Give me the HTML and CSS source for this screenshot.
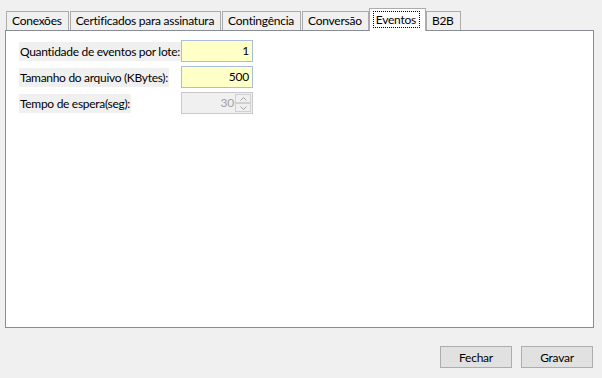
FILE: index.html
```html
<!DOCTYPE html>
<html lang="pt">
  <head>
    <meta charset="UTF-8" />
    <title>Configurações</title>
    <link rel="stylesheet" href="styles.css">
  </head>
  <body>
    <div class="window">
      <div class="tabs">
        <div class="tab">Conexões</div>
        <div class="tab">Certificados para assinatura</div>
        <div class="tab">Contingência</div>
        <div class="tab">Conversão</div>
        <div class="tab active"><span class="focus">Eventos</span></div>
        <div class="tab">B2B</div>
      </div>

      <div class="panel">
        <div class="row">
          <span class="label">Quantidade de eventos por lote:</span>
          <div class="input">1</div>
        </div>
        <div class="row">
          <span class="label">Tamanho do arquivo (KBytes):</span>
          <div class="input">500</div>
        </div>
        <div class="row">
          <span class="label">Tempo de espera(seg):</span>
          <div class="input disabled">
            <span class="value">30</span>
            <span class="spin">
              <span class="arrow">
                <svg width="7" height="4" viewBox="0 0 7 4"><path d="M0.5 3.5 L3.5 0.5 L6.5 3.5" fill="none" stroke="#a0a0a0" stroke-width="1"/></svg>
              </span>
              <span class="arrow">
                <svg width="7" height="4" viewBox="0 0 7 4"><path d="M0.5 0.5 L3.5 3.5 L6.5 0.5" fill="none" stroke="#a0a0a0" stroke-width="1"/></svg>
              </span>
            </span>
          </div>
        </div>
      </div>

      <div class="footer">
        <button class="btn">Fechar</button>
        <button class="btn">Gravar</button>
      </div>
    </div>
  </body>
</html>
```

FILE: styles.css
```css
body {
  margin: 0;
  background-color: #f0f0f0;
  font-family: Lato, "Liberation Sans", sans-serif;
  font-size: 12px;
  letter-spacing: -0.25px;
  color: #000;
}

.window {
  width: 602px;
  height: 378px;
  padding: 9px 8px 0 5px;
  box-sizing: border-box;
}

.tabs {
  display: flex;
  align-items: flex-end;
  padding-left: 1px;
  height: 22px;
  position: relative;
  z-index: 1;
  margin-bottom: -1px;
  white-space: nowrap;
}

.tab {
  height: 19px;
  box-sizing: border-box;
  border: 1px solid #acacac;
  border-bottom: none;
  background-color: #f0f0f0;
  padding: 0 6px 0 5px;
  line-height: 18px;
  margin-bottom: 1px;
}

.tab + .tab {
  margin-left: 1px;
}

.tab.active {
  height: 23px;
  background-color: #fff;
  margin-bottom: 0;
  padding: 2px 5px 0 3px;
  margin-left: 0;
}

.tab.active + .tab {
  margin-left: 0;
}

.focus {
  display: block;
  border: 1px dotted #000;
  padding: 0 3px 0 2px;
  line-height: 15px;
}

.panel {
  height: 298px;
  box-sizing: border-box;
  background-color: #fff;
  border: 1px solid #898c95;
  padding: 9px 0 0 13px;
}

.row {
  display: grid;
  grid-template-columns: 162px 72px;
  align-items: center;
  height: 22px;
  margin-bottom: 4px;
}

.label {
  justify-self: start;
  height: 19px;
  line-height: 19px;
  background-color: #f0f0f0;
  padding: 0 1px;
  letter-spacing: -0.3px;
  white-space: nowrap;
}

.input {
  height: 22px;
  box-sizing: border-box;
  border: 1px solid #a9bedb;
  background-color: #ffffc8;
  text-align: right;
  padding-right: 3px;
  line-height: 20px;
}

.input.disabled {
  display: flex;
  justify-content: flex-end;
  background-color: #f0f0f0;
  border-color: #c8c8c8;
  color: #a0a0a0;
  padding-right: 1px;
}

.value {
  padding-right: 1px;
}

.spin {
  display: flex;
  flex-direction: column;
  width: 16px;
  padding-top: 1px;
}

.arrow {
  height: 9px;
  border: 1px solid #d0d0d0;
  box-sizing: border-box;
  display: flex;
  align-items: center;
  justify-content: center;
}

.footer {
  display: flex;
  justify-content: flex-end;
  gap: 9px;
  padding-top: 18px;
  padding-right: 1px;
}

.btn {
  width: 72px;
  height: 22px;
  background-color: #e1e1e1;
  border: 1px solid #adadad;
  font-family: inherit;
  font-size: 12px;
  letter-spacing: inherit;
  padding: 0;
  color: #000;
}
```
